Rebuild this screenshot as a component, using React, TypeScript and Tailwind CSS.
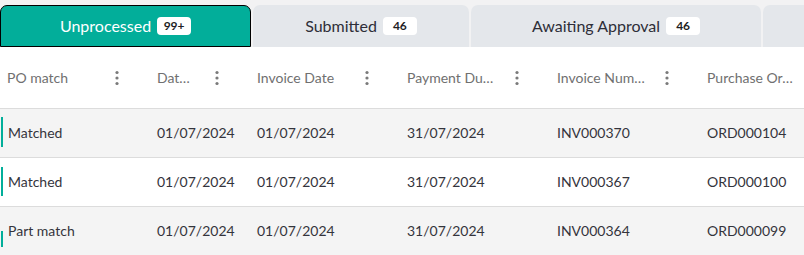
import React from "react";

type Tab = { label: string; count: string; width: string; active?: boolean };

const tabs: Tab[] = [
  { label: "Unprocessed", count: "99+", width: "w-[251px]", active: true },
  { label: "Submitted", count: "46", width: "w-[216px]" },
  { label: "Awaiting Approval", count: "46", width: "w-[290px]" },
  { label: "", count: "", width: "w-[120px]" },
];

type Col = { title: string; width: string };

const columns: Col[] = [
  { title: "PO match", width: "w-[150px]" },
  { title: "Date Received", width: "w-[100px]" },
  { title: "Invoice Date", width: "w-[150px]" },
  { title: "Payment Due Date", width: "w-[150px]" },
  { title: "Invoice Number", width: "w-[150px]" },
  { title: "Purchase Order", width: "w-[150px]" },
];

const rows = [
  { match: "Matched", d1: "01/07/2024", d2: "01/07/2024", d3: "31/07/2024", inv: "INV000370", ord: "ORD000104", bar: "top-[8px] h-[30px]" },
  { match: "Matched", d1: "01/07/2024", d2: "01/07/2024", d3: "31/07/2024", inv: "INV000367", ord: "ORD000100", bar: "top-[9px] h-[29px]" },
  { match: "Part match", d1: "01/07/2024", d2: "01/07/2024", d3: "31/07/2024", inv: "INV000364", ord: "ORD000099", bar: "top-[24px] h-[16px]" },
];

function Kebab() {
  return (
    <svg width="16" height="16" viewBox="0 0 16 16" className="shrink-0 text-[#7a7a7a]">
      <circle cx="8" cy="2.5" r="1.6" fill="currentColor" />
      <circle cx="8" cy="8" r="1.6" fill="currentColor" />
      <circle cx="8" cy="13.5" r="1.6" fill="currentColor" />
    </svg>
  );
}

export default function App() {
  return (
    <div
      className="w-[804px] h-[255px] overflow-hidden bg-[#f2f2f3]"
      style={{ fontFamily: "Lato, 'Noto Sans', sans-serif" }}
    >
      <div className="flex gap-[2px] pt-[5px] w-[1000px]">
        {tabs.map((t, i) => (
          <div
            key={i}
            className={`${t.width} h-[42px] shrink-0 rounded-t-[7px] flex items-center justify-center gap-[6px] ${
              t.active
                ? "bg-[#02ae9a] border border-black text-white"
                : "bg-[#e4e7eb] text-[#2e2e38]"
            }`}
          >
            {t.label && <span className="text-[16px] leading-none">{t.label}</span>}
            {t.count && (
              <span className="bg-white rounded-[4px] h-[18px] min-w-[34px] px-[6px] flex items-center justify-center text-[12px] font-bold text-[#1e1e24]">
                {t.count}
              </span>
            )}
          </div>
        ))}
      </div>
      <div className="bg-white w-[900px]">
        <div className="flex h-[62px] border-b border-[#dcdcdc]">
          {columns.map((c) => (
            <div
              key={c.title}
              className={`${c.width} shrink-0 pl-[7px] pr-[25px] flex items-center gap-[14px]`}
            >
              <span className="flex-1 min-w-0 truncate text-[14px] text-[#707070]">{c.title}</span>
              <Kebab />
            </div>
          ))}
        </div>
        {rows.map((r, i) => (
          <div
            key={i}
            className={`relative flex h-[49px] border-b border-[#dcdcdc] text-[14px] text-[#34343c] ${
              i % 2 === 0 ? "bg-[#f4f4f4]" : "bg-white"
            }`}
          >
            <div className={`absolute left-[1px] w-[2px] bg-[#02ae9a] ${r.bar}`} />
            <div className="w-[150px] shrink-0 pl-[8px] pb-[2px] flex items-center">{r.match}</div>
            <div className="w-[100px] shrink-0 pl-[7px] pb-[2px] flex items-center">{r.d1}</div>
            <div className="w-[150px] shrink-0 pl-[7px] pb-[2px] flex items-center">{r.d2}</div>
            <div className="w-[150px] shrink-0 pl-[7px] pb-[2px] flex items-center">{r.d3}</div>
            <div className="w-[150px] shrink-0 pl-[7px] pb-[2px] flex items-center">{r.inv}</div>
            <div className="w-[150px] shrink-0 pl-[7px] pb-[2px] flex items-center">{r.ord}</div>
          </div>
        ))}
      </div>
    </div>
  );
}
